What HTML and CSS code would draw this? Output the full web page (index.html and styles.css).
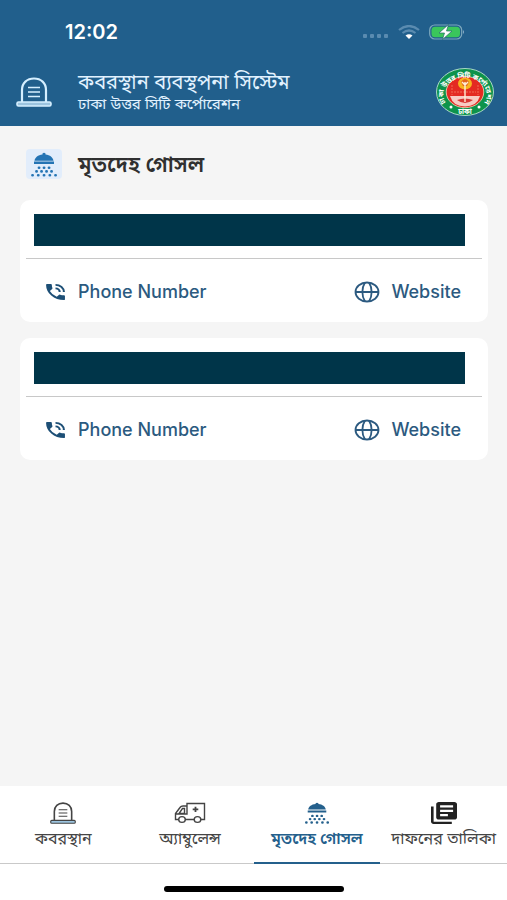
FILE: index.html
```html
<!DOCTYPE html>
<html lang="bn">
<head>
<meta charset="utf-8">
<meta name="viewport" content="width=device-width, initial-scale=1">
<title>কবরস্থান ব্যবস্থপনা সিস্টেম</title>
<link rel="stylesheet" href="styles.css">
</head>
<body>
<svg class="sprite" width="0" height="0" aria-hidden="true">
  <symbol id="grave" viewBox="0 0 36 30" preserveAspectRatio="none">
    <path d="M6 25V13C6 6 11 1.500 18 1.500S30 6 30 13V25" fill="none" stroke="currentColor" stroke-width="2.200"/>
    <rect class="grave-base" x="1" y="25" width="34" height="4" rx="1.500" stroke="currentColor" stroke-width="1.600"/>
    <path d="M12 10.500H24M12 15H24M12 19.500H24" stroke="currentColor" stroke-width="1.500"/>
  </symbol>
  <symbol id="shower" viewBox="0 0 28 26" preserveAspectRatio="none">
    <path d="M12.500 1.500Q14 0 15.500 1.500V2.500C20 3 23 5.500 23.500 9H4.500C5 5.500 8 3 12.500 2.500ZM4 10H24V12.500H4Z" fill="currentColor"/>
    <path d="M9 16.400h.1M14 16.400h.1M19 16.400h.1M6.500 20.200h.1M11.500 20.200h.1M16.500 20.200h.1M21.500 20.200h.1M2.500 24.200h.1M8.200 24.200h.1M14 24.200h.1M19.800 24.200h.1M25.500 24.200h.1" stroke="currentColor" stroke-width="2.800" stroke-linecap="round"/>
  </symbol>
  <symbol id="phone" viewBox="2 2 20 20" preserveAspectRatio="none">
    <path d="M20 15.500c-1.250 0-2.450-.2-3.570-.57a1 1 0 0 0-1.020.24l-2.200 2.200a15.100 15.100 0 0 1-6.590-6.590l2.200-2.210a1 1 0 0 0 .25-1A11.400 11.400 0 0 1 8.500 4a1 1 0 0 0-1-1H4a1 1 0 0 0-1 1 17 17 0 0 0 17 17 1 1 0 0 0 1-1v-3.500a1 1 0 0 0-1-1zM19 12h2a9 9 0 0 0-9-9v2a7 7 0 0 1 7 7zm-4 0h2a5 5 0 0 0-5-5v2a3 3 0 0 1 3 3z" fill="currentColor"/>
  </symbol>
  <symbol id="globe" viewBox="0 0 26 22" preserveAspectRatio="none">
    <g fill="none" stroke="currentColor" stroke-width="1.800">
      <ellipse cx="13" cy="11" rx="11.500" ry="9.500"/>
      <path d="M1.500 11H24.500M11 1.500C7.500 7 7.500 15 11 20.500M15 1.500C18.500 7 18.500 15 15 20.500"/>
    </g>
  </symbol>
  <symbol id="ambulance" viewBox="0 0 32 22" preserveAspectRatio="none">
    <g fill="none" stroke="currentColor" stroke-width="1.400">
      <path d="M5 17.500H1.500V11.500L6 5.500Q7 4 9 4H13V1.500H30.500V17.500H27M20 17.500H11M13 4V12H2M10.500 6.500H8.500L5 11.500H10.500Z"/>
      <ellipse cx="8" cy="17.500" rx="3.300" ry="2.900"/>
      <ellipse cx="23.500" cy="17.500" rx="3.300" ry="2.900"/>
      <path d="M21.500 4.700V10M18.700 7.300H24.300" stroke-width="1.800"/>
    </g>
  </symbol>
  <symbol id="list" viewBox="2 2 20 20" preserveAspectRatio="none">
    <path d="M4 6H2v14c0 1.100.9 2 2 2h14v-2H4V6zm16-4H8c-1.100 0-2 .9-2 2v12c0 1.100.9 2 2 2h12c1.100 0 2-.9 2-2V4c0-1.100-.9-2-2-2zm-1 9H9V9h10v2zm-4 4H9v-2h6v2zm4-8H9V5h10v2z" fill="currentColor"/>
  </symbol>
</svg>

<div class="app">
  <header class="top">
    <div class="status">
      <time class="clock">12:02</time>
      <svg class="signal" viewBox="0 0 26 4" aria-hidden="true"><g fill="#5a8bb0"><rect width="4" height="4" rx="1"/><rect x="7" width="4" height="4" rx="1"/><rect x="14" width="4" height="4" rx="1"/><rect x="21" width="4" height="4" rx="1"/></g></svg>
      <svg class="wifi" viewBox="0 0 22 14" aria-hidden="true">
        <path d="M1 5Q11-3 21 5M4.500 8Q11 3 17.500 8" fill="none" stroke="#5a8bb0" stroke-width="2.200"/>
        <path d="M7.500 10.500Q11 8 14.500 10.500L11 14Z" fill="#fff"/>
      </svg>
      <svg class="battery" viewBox="0 0 36 16" aria-hidden="true">
        <rect x=".7" y="1" width="32" height="14" rx="5" fill="none" stroke="#7da8bd" stroke-width="1.200"/>
        <rect x="2.500" y="2.700" width="28.500" height="10.600" rx="3.500" fill="#3ac65b"/>
        <path d="M34 6Q36 8 34 10Z" fill="#8db0c9"/>
        <path d="M19.500 .5L10 9H15.500L13.500 15.500L23 7H17.500Z" fill="#fff" stroke="#236b68" stroke-width=".7"/>
      </svg>
    </div>
    <div class="brand">
      <svg class="brand-icon" aria-hidden="true"><use href="#grave"/></svg>
      <div class="brand-text">
        <h1>কবরস্থান ব্যবস্থপনা সিস্টেম</h1>
        <p>ঢাকা উত্তর সিটি কর্পোরেশন</p>
      </div>
      <svg class="seal" viewBox="0 0 58 48" role="img" aria-label="ঢাকা উত্তর সিটি কর্পোরেশন">
        <defs>
          <path id="arc-top" d="M9.500 34A21.500 17 0 1 1 48.500 34"/>
        </defs>
        <ellipse cx="29" cy="24" rx="28.500" ry="23.500" fill="#0d934b" stroke="#a9d8c5"/>
        <ellipse cx="29" cy="24" rx="18.800" ry="15.700" fill="#e42a22" stroke="#f2d8bc" stroke-width=".8"/>
        <path d="M14 28H44Q41 38.500 29 38.500T14 28Z" fill="#f8cbc4"/>
        <path d="M21 32Q29 29 37 32Q29 38 21 32Z" fill="#d73733"/>
        <path d="M16 17V27M42 17V27M18 24H40" stroke="#f27c62" stroke-width=".8" stroke-dasharray="2 1"/>
        <ellipse cx="29" cy="15.500" rx="7" ry="6" fill="#f7b51e"/>
        <path d="M25 14Q29 8 33 14L31 18H27Z" fill="#e5651e"/>
        <path d="M29 14V34M26 14L29 17L32 14" fill="none" stroke="#fff0d5" stroke-width="1.400"/>
        <text class="seal-text"><textPath href="#arc-top" startOffset="50%" text-anchor="middle">ঢাকা উত্তর সিটি কর্পোরেশন</textPath></text>
        <text class="seal-name" x="29" y="45.500" text-anchor="middle">ঢাকা</text>
        <circle cx="15" cy="39" r="1.500" fill="#fff"/><circle cx="43" cy="39" r="1.500" fill="#fff"/>
      </svg>
    </div>
  </header>

  <main class="content">
    <div class="section-head">
      <span class="tile"><svg class="tile-icon" aria-hidden="true"><use href="#shower"/></svg></span>
      <h2>মৃতদেহ গোসল</h2>
    </div>
    <article class="card">
      <div class="card-name"></div>
      <div class="card-links">
        <a href="#phone"><svg class="phone-icon" aria-hidden="true"><use href="#phone"/></svg>Phone Number</a>
        <a href="#globe"><svg class="globe-icon" aria-hidden="true"><use href="#globe"/></svg>Website</a>
      </div>
    </article>
    <article class="card">
      <div class="card-name"></div>
      <div class="card-links">
        <a href="#phone"><svg class="phone-icon" aria-hidden="true"><use href="#phone"/></svg>Phone Number</a>
        <a href="#globe"><svg class="globe-icon" aria-hidden="true"><use href="#globe"/></svg>Website</a>
      </div>
    </article>
  </main>

  <nav class="tabs">
    <a class="tab" href="#grave"><svg class="tab-icon" aria-hidden="true"><use href="#grave"/></svg>কবরস্থান</a>
    <a class="tab" href="#ambulance"><svg class="tab-icon wide" aria-hidden="true"><use href="#ambulance"/></svg>অ্যাম্বুলেন্স</a>
    <a class="tab active" href="#shower" aria-current="page"><svg class="tab-icon" aria-hidden="true"><use href="#shower"/></svg>মৃতদেহ গোসল</a>
    <a class="tab" href="#list"><svg class="tab-icon dark" aria-hidden="true"><use href="#list"/></svg>দাফনের তালিকা</a>
  </nav>
  <footer class="home"><span class="home-bar"></span></footer>
</div>
</body>
</html>
```
FILE: styles.css
```css
* { box-sizing: border-box; }
body {
  margin: 0;
  font-family: Inter, "Noto Sans", "Noto Sans Bengali", sans-serif;
  color: #303030;
  background: #fff;
}
h1, h2, p { margin: 0; }
a { color: inherit; text-decoration: none; }
svg { display: block; flex: none; }
.sprite { position: absolute; }
.app { min-height: 100vh; display: flex; flex-direction: column; }

.top { background: #215f8c; color: #fff; }
.status {
  display: flex;
  align-items: center;
  height: 64px;
  padding: 0 42px 0 65px;
}
.clock { font-size: 20px; font-weight: 600; margin-right: auto; }
.signal { width: 26px; height: 4px; margin: 8px 9px 0 0; }
.wifi { width: 22px; height: 14px; margin-right: 9px; }
.battery { width: 36px; height: 16px; }
.brand {
  display: flex;
  align-items: center;
  height: 62px;
  padding: 0 13px 6px 16px;
}
.brand-icon { width: 36px; height: 30px; margin-right: 26px; color: #d5efff; }
.brand-text { flex: 1; min-width: 0; color: #e2f2ff; }
h1 { font-size: 20px; line-height: 24px; font-weight: 400; }
.brand-text p { font-size: 15px; line-height: 20px; }
.seal { width: 58px; height: 48px; }
.seal-text, .seal-name { font-size: 7px; font-weight: 700; fill: #fff; }
.grave-base { fill: #9cc4df; }

.content { flex: 1; background: #f5f5f5; padding: 20px 19px 20px 20px; }
.section-head { display: flex; align-items: center; gap: 16px; height: 36px; margin: 0 0 18px 6px; }
.tile {
  display: grid;
  place-items: center;
  width: 36px;
  height: 30px;
  border-radius: 4px;
  background: #e2edfb;
}
.tile-icon { width: 28px; height: 25px; color: #2474b4; }
h2 { font-size: 22px; line-height: 28px; font-weight: 600; }
.card { background: #fff; border-radius: 10px; padding: 14px 6px 0; margin-bottom: 16px; }
.card-name { height: 32px; margin: 0 17px 12px 8px; background: #003549; }
.card-links {
  display: flex;
  justify-content: space-between;
  align-items: center;
  height: 64px;
  padding: 2px 21px 0 19px;
  border-top: 1px solid #c8c8c8;
  color: #2c5a80;
  font-size: 18px;
  font-weight: 500;
}
.card-links a { display: flex; align-items: center; }
.phone-icon { width: 21px; height: 18px; margin-right: 12px; color: #1d4f76; }
.globe-icon { width: 26px; height: 22px; margin-right: 11px; }

.tabs { display: grid; grid-template-columns: repeat(4, 1fr); background: #fff; }
.tab {
  display: flex;
  flex-direction: column;
  align-items: center;
  gap: 3px;
  height: 78px;
  padding-top: 16px;
  border-bottom: 1px solid #c9c9c9;
  font-size: 16px;
  line-height: 22px;
  white-space: nowrap;
  color: #444;
}
.tab.active { color: #24608c; font-weight: 600; border-bottom: 2px solid #24608c; }
.tab-icon { width: 26px; height: 22px; }
.tab-icon.wide { width: 32px; }
.tab-icon.dark { color: #222; }
.tab .grave-base { fill: #999; }
.home { display: flex; justify-content: center; height: 36px; padding-top: 22px; background: #fff; }
.home-bar { width: 180px; height: 6px; border-radius: 3px; background: #000; }
```
